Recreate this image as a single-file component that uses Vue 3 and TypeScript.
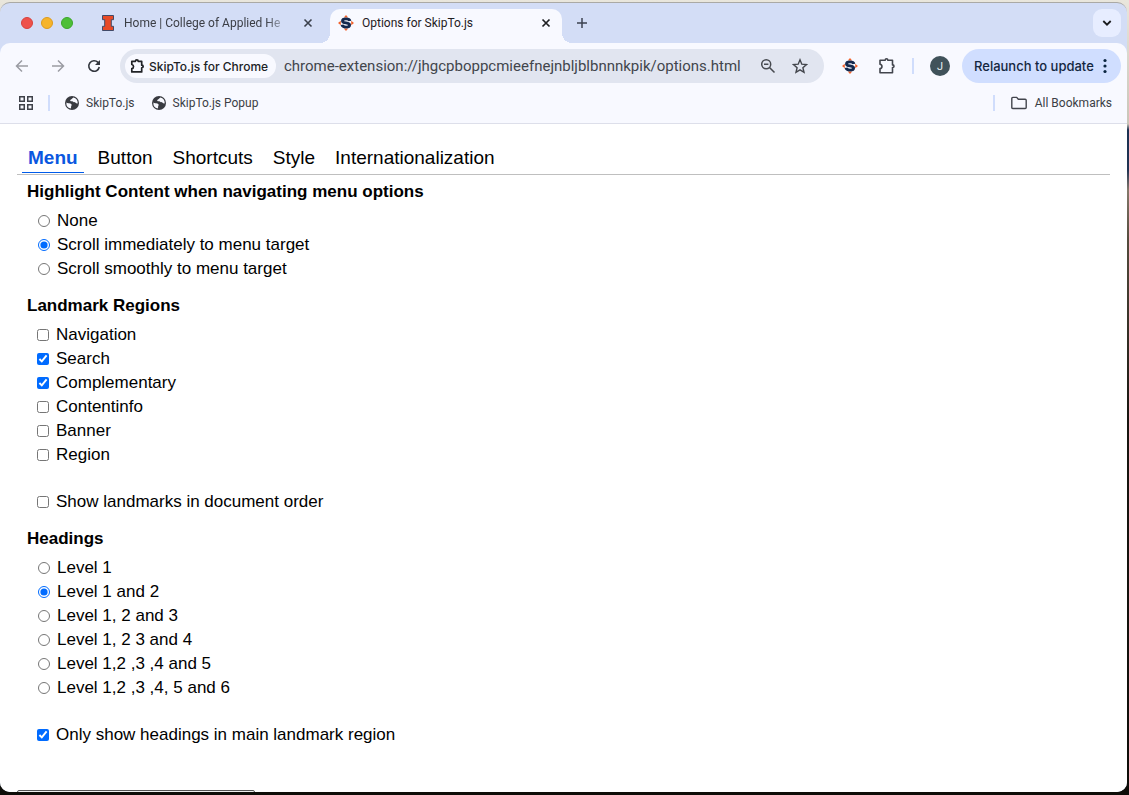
<script setup lang="ts">
import { ref } from 'vue'

const url = ref('chrome-extension://jhgcpboppcmieefnejnbljblbnnnkpik/options.html')
const tabs: string[] = ['Menu', 'Button', 'Shortcuts', 'Style', 'Internationalization']
const activeTab = ref('Menu')

const highlightOptions: string[] = ['None', 'Scroll immediately to menu target', 'Scroll smoothly to menu target']
const highlight = ref('Scroll immediately to menu target')

const landmarkOptions: string[] = ['Navigation', 'Search', 'Complementary', 'Contentinfo', 'Banner', 'Region']
const landmarks = ref<string[]>(['Search', 'Complementary'])
const documentOrder = ref(false)

const headingOptions: string[] = [
  'Level 1',
  'Level 1 and 2',
  'Level 1, 2 and 3',
  'Level 1, 2 3 and 4',
  'Level 1,2 ,3 ,4 and 5',
  'Level 1,2 ,3 ,4, 5 and 6',
]
const headings = ref('Level 1 and 2')
const mainOnly = ref(true)

const bookmarks: string[] = ['SkipTo.js', 'SkipTo.js Popup']
</script>

<template>
  <div class="desktop">
    <div class="window">
      <header class="strip">
        <div class="lights">
          <button class="light red" aria-label="Close window"></button>
          <button class="light amber" aria-label="Minimize window"></button>
          <button class="light green" aria-label="Zoom window"></button>
        </div>
        <div class="tab">
          <svg class="fav" width="16" height="16" viewBox="0 0 16 16">
            <path d="M2.500.5h11v4.200h-2.200v6.600h2.200v4.200h-11v-4.200h2.200V4.700H2.500z" fill="#e84a27" stroke="#414a68" stroke-width="1" />
          </svg>
          <span class="tab-title faded">Home | College of Applied He</span>
          <button class="close" aria-label="Close tab">
            <svg width="10" height="10" viewBox="0 0 10 10"><path d="M1.500 1.500l7 7M8.500 1.500l-7 7" stroke="#3a404c" stroke-width="1.600" /></svg>
          </button>
        </div>
        <div class="tab current">
          <svg class="fav" width="16" height="16" viewBox="0 0 16 16">
            <path d="M8 0l2.200 2.400H5.800zM8 16l2.200-2.400H5.800zM0 8l2.800-2.200v4.400zM16 8l-2.800-2.200v4.400z" fill="#f2622b" />
            <path d="M11.900 6C11.600 4.500 10.200 3.900 8 3.900c-2.200 0-3.500.8-3.500 2 0 2.700 7.100 1.400 7.100 4.100 0 1.400-1.400 2.100-3.600 2.100-2.400 0-3.700-.8-4-2.300" fill="none" stroke="#14284d" stroke-width="2.900" />
          </svg>
          <span class="tab-title">Options for SkipTo.js</span>
          <button class="close" aria-label="Close tab">
            <svg width="10" height="10" viewBox="0 0 10 10"><path d="M1.500 1.500l7 7M8.500 1.500l-7 7" stroke="#1f2023" stroke-width="1.700" /></svg>
          </button>
        </div>
        <button class="plain new-tab" aria-label="New tab">
          <svg width="12" height="12" viewBox="0 0 12 12"><path d="M6 1v10M1 6h10" stroke="#3c4250" stroke-width="1.500" /></svg>
        </button>
        <button class="search-tabs" aria-label="Search tabs">
          <svg width="10" height="8" viewBox="0 0 10 8"><path d="M1.300 2l3.700 3.700L8.700 2" fill="none" stroke="#1a1b1e" stroke-width="1.800" /></svg>
        </button>
      </header>

      <div class="chrome">
        <div class="toolbar">
          <nav class="nav">
            <button class="plain" aria-label="Back">
              <svg width="14" height="14" viewBox="0 0 14 14"><path d="M13 7H2M7 1.500L1.500 7 7 12.500" fill="none" stroke="#9a9ca3" stroke-width="1.500" /></svg>
            </button>
            <button class="plain" aria-label="Forward">
              <svg width="14" height="14" viewBox="0 0 14 14"><path d="M1 7h11M7 1.500L12.500 7 7 12.500" fill="none" stroke="#9a9ca3" stroke-width="1.500" /></svg>
            </button>
            <button class="plain" aria-label="Reload">
              <svg width="14" height="14" viewBox="0 0 14 14"><path d="M12.300 8A5.300 5.300 0 1 1 11 3.400L12.500 5" fill="none" stroke="#33373f" stroke-width="1.600" /><path d="M13 1v5H8z" fill="#33373f" /></svg>
            </button>
          </nav>
          <div class="omnibox">
            <button class="chip">
              <svg width="15" height="16" viewBox="0 0 15 16"><path d="M1.800 3.300h3.600c0-2 2.800-2 2.800 0h3.500v3.900c2 0 2 2.600 0 2.600v4.100H1.800v-3.200c2.300-.300 2.300-3.900 0-4.200z" fill="none" stroke="#202226" stroke-width="1.700" stroke-linejoin="round" /></svg>
              <span>SkipTo.js for Chrome</span>
            </button>
            <input v-model="url" class="address" type="text" aria-label="Address" spellcheck="false" />
            <button class="plain" aria-label="Zoom">
              <svg width="16" height="16" viewBox="0 0 16 16"><g fill="none" stroke="#474a50" stroke-width="1.500"><circle cx="6.200" cy="6.200" r="4.500" /><path d="M9.500 9.500l5 5M4 6.200h4.400" /></g></svg>
            </button>
            <button class="plain" aria-label="Bookmark">
              <svg width="16" height="16" viewBox="0 0 16 16"><path d="M8 1.800l1.800 4.400 4.700.4-3.600 3.100 1.100 4.600-4-2.500-4 2.500 1.100-4.600L1.500 6.600l4.700-.4z" fill="none" stroke="#43464c" stroke-width="1.400" /></svg>
            </button>
          </div>
          <button class="plain ext" aria-label="SkipTo.js">
            <svg width="16" height="16" viewBox="0 0 16 16">
              <path d="M8 0l2.200 2.400H5.800zM8 16l2.200-2.400H5.800zM0 8l2.800-2.200v4.400zM16 8l-2.800-2.200v4.400z" fill="#f2622b" />
              <path d="M11.900 6C11.600 4.500 10.200 3.900 8 3.900c-2.200 0-3.500.8-3.500 2 0 2.700 7.100 1.400 7.100 4.100 0 1.400-1.400 2.100-3.600 2.100-2.400 0-3.700-.8-4-2.300" fill="none" stroke="#14284d" stroke-width="2.900" />
            </svg>
          </button>
          <button class="plain puzzle" aria-label="Extensions">
            <svg width="18" height="18" viewBox="0 0 18 18"><path d="M2 3.200h5.200c0-2 2.600-2 2.600 0h4.700v4.700c2 0 2 2.600 0 2.600v5.300H2v-4.200c2.600-.300 2.600-4 0-4.300z" fill="none" stroke="#42454d" stroke-width="1.600" stroke-linejoin="round" /></svg>
          </button>
          <span class="rule"></span>
          <button class="avatar" aria-label="Profile">J</button>
          <button class="relaunch">
            <span>Relaunch to update</span>
            <svg width="4" height="16" viewBox="0 0 4 16" fill="#0a2540"><circle cx="2" cy="2.500" r="1.600" /><circle cx="2" cy="8" r="1.600" /><circle cx="2" cy="13.500" r="1.600" /></svg>
          </button>
        </div>

        <div class="bookmarks">
          <button class="plain" aria-label="Tab groups">
            <svg width="14" height="14" viewBox="0 0 14 14" fill="none" stroke="#3f424a" stroke-width="1.500"><path d="M.75.75h4.500v4.500H.75zM8.750.75h4.500v4.500h-4.500zM.75 8.750h4.500v4.500H.75zM8.750 8.750h4.500v4.500h-4.500z" /></svg>
          </button>
          <span class="rule first"></span>
          <a v-for="name in bookmarks" :key="name" class="bookmark" href="#">
            <svg width="14" height="14" viewBox="0 0 14 14"><circle cx="7" cy="7" r="7" fill="#393b41" /><path d="M8.400 1.600C7.200 2 7.300 3.200 6 3.500c-1.300.4-.9 1.300-.2 1.700.8.500 1.900-.100 2.700.8.800.8 2.300.2 2.900 1.200.300.6.8.4 1.300.1A5.700 5.700 0 0 0 8.400 1.600zM1.400 6.400c1.200.8 2.500.8 3.700 1 1.400.2 2 1.400 1.300 2.300-.6.700.1 1.500-.7 2.800A5.700 5.700 0 0 1 1.400 6.400z" fill="#f8f9ff" /></svg>
            <span>{{ name }}</span>
          </a>
          <span class="rule last"></span>
          <button class="plain bookmark all">
            <svg width="16" height="14" viewBox="0 0 16 14"><path d="M.8 11.500V2.400q0-1 1-1h3.900l1.600 1.800h6.900q1 0 1 1v7.300q0 1-1 1H1.800q-1 0-1-1z" fill="none" stroke="#42454d" stroke-width="1.400" /></svg>
            <span>All Bookmarks</span>
          </button>
        </div>
      </div>

      <main class="page">
        <div class="option-tabs" role="tablist">
          <button
            v-for="name in tabs"
            :key="name"
            role="tab"
            class="option-tab"
            :class="{ selected: name === activeTab }"
            :aria-selected="name === activeTab"
            @click="activeTab = name"
          >{{ name }}</button>
        </div>

        <fieldset class="group">
          <legend>Highlight Content when navigating menu options</legend>
          <label v-for="o in highlightOptions" :key="o" class="choice radio">
            <input v-model="highlight" type="radio" name="highlight" :value="o" /><span>{{ o }}</span>
          </label>
        </fieldset>

        <fieldset class="group">
          <legend>Landmark Regions</legend>
          <label v-for="o in landmarkOptions" :key="o" class="choice">
            <input v-model="landmarks" type="checkbox" :value="o" /><span>{{ o }}</span>
          </label>
          <label class="choice apart">
            <input v-model="documentOrder" type="checkbox" /><span>Show landmarks in document order</span>
          </label>
        </fieldset>

        <fieldset class="group">
          <legend>Headings</legend>
          <label v-for="o in headingOptions" :key="o" class="choice radio">
            <input v-model="headings" type="radio" name="headings" :value="o" /><span>{{ o }}</span>
          </label>
          <label class="choice apart">
            <input v-model="mainOnly" type="checkbox" /><span>Only show headings in main landmark region</span>
          </label>
        </fieldset>

        <button class="reset" aria-label="Reset"></button>
      </main>
    </div>
  </div>
</template>

<style>
body {
  margin: 0;
  overflow: hidden;
}
</style>

<style scoped>
* {
  box-sizing: border-box;
}
button {
  font: inherit;
  color: inherit;
  border: 0;
  padding: 0;
  background: none;
}
svg {
  display: block;
  flex: none;
}
.desktop {
  height: 100vh;
  padding: 2px 2px 3px 0;
  background: linear-gradient(#e9e6dc 0, #c9c5b8 124px, #1b3152 130px, #203352 170px, #85796b 190px, #544b3c 240px, #17150f 420px, #0e0d08 100%);
  font-family: Roboto, "Liberation Sans", sans-serif;
  font-size: 12px;
  color: #3b3e45;
}
.window {
  height: 100%;
  display: flex;
  flex-direction: column;
  overflow: hidden;
  border-top: 1px solid #aaa9a5;
  border-radius: 10px;
  background: #d3ddf6;
}
.strip {
  display: flex;
  align-items: flex-end;
  flex: none;
  height: 40px;
  padding-right: 6px;
}
.lights {
  display: flex;
  align-items: center;
  gap: 8px;
  height: 40px;
  padding-left: 21px;
  width: 90px;
}
.light {
  width: 12px;
  height: 12px;
  border-radius: 50%;
}
.red {
  background: #ee514b;
  border: 1px solid #d8413c;
}
.amber {
  background: #f6b42b;
  border: 1px solid #dd9b1d;
}
.green {
  background: #4dbf38;
  border: 1px solid #3ca72a;
}
.tab {
  position: relative;
  display: flex;
  align-items: center;
  width: 240px;
  height: 34px;
  padding: 0 17px 6px 10px;
}
.tab.current {
  width: 232px;
  padding: 0 11px 6px 8px;
  border-radius: 10px 10px 0 0;
  background: #f8f9ff;
  color: #1f2023;
}
.tab.current::before,
.tab.current::after {
  content: "";
  position: absolute;
  bottom: 0;
  width: 10px;
  height: 10px;
}
.tab.current::before {
  right: 100%;
  background: radial-gradient(circle at 0 0, transparent 10px, #f8f9ff 10px);
}
.tab.current::after {
  left: 100%;
  background: radial-gradient(circle at 100% 0, transparent 10px, #f8f9ff 10px);
}
.tab-title {
  flex: 1;
  min-width: 0;
  margin-left: 8px;
  white-space: nowrap;
  overflow: hidden;
}
.faded {
  margin-right: 13px;
  mask-image: linear-gradient(to right, #000 calc(100% - 24px), transparent);
}
.close {
  flex: none;
}
.new-tab {
  align-self: center;
  margin-left: 14px;
}
.search-tabs {
  align-self: center;
  display: grid;
  place-items: center;
  width: 28px;
  height: 28px;
  margin-left: auto;
  border-radius: 9px;
  background: #e7edff;
}
.chrome {
  flex: none;
  border-bottom: 1px solid #dddfea;
  border-radius: 10px 10px 0 0;
  background: #f8f9ff;
}
.toolbar {
  display: flex;
  align-items: center;
  height: 46px;
  padding: 0 6px 0 15px;
}
.nav {
  display: flex;
  gap: 22px;
  width: 105px;
}
.omnibox {
  flex: 1;
  display: flex;
  align-items: center;
  gap: 16px;
  height: 34px;
  padding: 0 16px 0 5px;
  border-radius: 17px;
  background: #e1e5f0;
}
.chip {
  flex: none;
  display: flex;
  align-items: center;
  gap: 4px;
  width: 151px;
  height: 24px;
  padding-left: 5px;
  border-radius: 12px;
  background: #f8f9ff;
  color: #202226;
  font-family: Inter, Roboto, sans-serif;
  font-size: 12px;
  font-weight: 500;
  white-space: nowrap;
}
.address {
  flex: 1;
  min-width: 0;
  margin-left: -8px;
  padding: 0;
  border: 0;
  outline: 0;
  background: none;
  font: inherit;
  font-size: 15px;
  color: #42454c;
}
.ext {
  margin-left: 18px;
}
.puzzle {
  margin-left: 20px;
}
.rule {
  flex: none;
  width: 2px;
  height: 16px;
  background: #d0ddfc;
}
.puzzle + .rule {
  margin: 0 16px;
}
.avatar {
  width: 20px;
  height: 20px;
  border-radius: 50%;
  background: #40525a;
  color: #e5edf0;
  font-size: 11px;
}
.relaunch {
  display: flex;
  align-items: center;
  justify-content: space-between;
  width: 159px;
  height: 34px;
  margin-left: 12px;
  padding: 0 14px 0 12px;
  border-radius: 17px;
  background: #d0deff;
  color: #14273f;
  font-family: Inter, Roboto, sans-serif;
  font-size: 13px;
  font-weight: 500;
  white-space: nowrap;
}
.bookmarks {
  display: flex;
  align-items: center;
  height: 34px;
  padding: 0 15px 7px 19px;
}
.first {
  margin: 0 15px;
}
.bookmark {
  display: flex;
  align-items: center;
  gap: 7px;
  margin-right: 17px;
  color: inherit;
  text-decoration: none;
}
.last {
  margin: 0 16px 0 auto;
}
.all {
  gap: 8px;
  margin-right: 0;
}
.page {
  flex: 1;
  min-height: 0;
  overflow: hidden;
  padding: 19px 17px 0;
  background: #fff;
  color: #000;
  font-family: "Liberation Sans", Arial, sans-serif;
  font-size: 17px;
  line-height: 24px;
}
.option-tabs {
  display: flex;
  gap: 8px;
  padding: 0 5px 1px;
  border-bottom: 1px solid #bfbfbf;
}
.option-tab {
  padding: 3px 6px 2px;
  border-bottom: 1px solid transparent;
  font-size: 19px;
  line-height: 24px;
}
.option-tab.selected {
  border-color: #005bea;
  color: #0a57e0;
  font-weight: bold;
}
.group {
  margin: 0 0 13px;
  padding: 0 0 0 20px;
  border: 0;
}
.option-tabs + .group {
  margin-top: 5px;
}
legend {
  margin: 0 0 5px -10px;
  padding: 0;
  font-weight: bold;
}
.choice {
  display: flex;
  align-items: center;
  gap: 7px;
}
.radio {
  padding-left: 1px;
}
.choice input {
  width: 12px;
  height: 12px;
  margin: 0;
  accent-color: #006bff;
}
.apart {
  margin-top: 23px;
}
.reset {
  display: block;
  width: 238px;
  height: 32px;
  margin-top: 43px;
  border: 1px solid #555;
  border-radius: 2px;
  background: #efefef;
}
</style>
